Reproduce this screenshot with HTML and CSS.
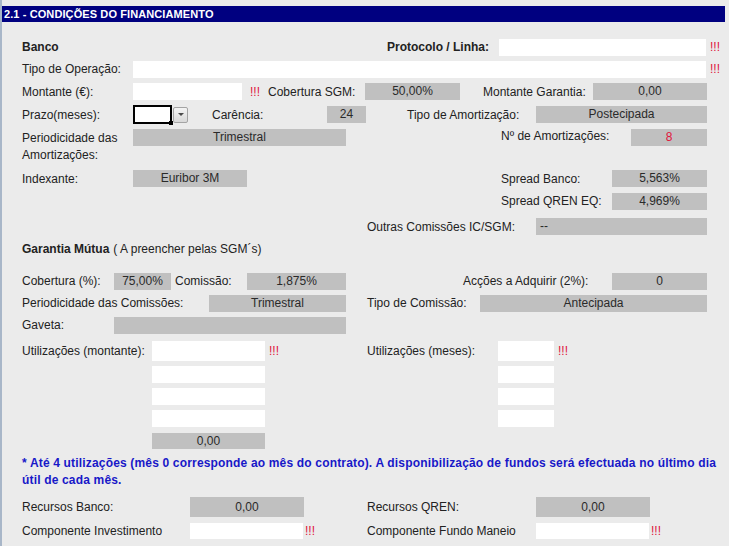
FILE: index.html
```html
<!DOCTYPE html>
<html lang="pt">
<head>
<meta charset="utf-8">
<title>Condições do Financiamento</title>
<link rel="stylesheet" href="styles.css">
</head>
<body>
<div class="page">
  <div class="hdr">2.1 - CONDIÇÕES DO FINANCIAMENTO</div>
  <div class="form">
    <div class="row r1">
      <div class="lbl b w365">Banco</div>
      <div class="lbl b w112">Protocolo / Linha:</div>
      <div class="in w207"></div>
      <div class="req pl4">!!!</div>
    </div>
    <div class="row r2">
      <div class="lbl w111">Tipo de Operação:</div>
      <div class="in w573"></div>
      <div class="req pl4">!!!</div>
    </div>
    <div class="row r3">
      <div class="lbl w111">Montante (€):</div>
      <div class="in w109"></div>
      <div class="req w26 pl8">!!!</div>
      <div class="lbl w97">Cobertura SGM:</div>
      <div class="ro w95">50,00%</div>
      <div class="lbl w133 pl23">Montante Garantia:</div>
      <div class="ro w114">0,00</div>
    </div>
    <div class="row r4">
      <div class="lbl w111">Prazo(meses):</div>
      <div class="sel">
        <div class="sel-box"><span class="sel-corner"></span></div>
        <div class="sel-btn"><span class="arrow"></span></div>
      </div>
      <div class="lbl w139 pl24">Carência:</div>
      <div class="ro w39">24</div>
      <div class="lbl w170 pl41">Tipo de Amortização:</div>
      <div class="ro w171">Postecipada</div>
    </div>
    <div class="row r5">
      <div class="lbl w111 two">Periodicidade das<br>Amortizações:</div>
      <div class="ro w213 mt3">Trimestral</div>
      <div class="lbl w285 pl155 mt3">Nº de Amortizações:</div>
      <div class="ro w76 mt3 red">8</div>
    </div>
    <div class="row r6">
      <div class="lbl w111">Indexante:</div>
      <div class="ro w114">Euribor 3M</div>
      <div class="lbl w365 pl254">Spread Banco:</div>
      <div class="ro w95">5,563%</div>
    </div>
    <div class="row r7">
      <div class="lbl w111 ml479">Spread QREN EQ:</div>
      <div class="ro w95">4,969%</div>
    </div>
    <div class="row r8">
      <div class="lbl w169 ml345">Outras Comissões IC/SGM:</div>
      <div class="ro w171 left">--</div>
    </div>
    <div class="row r9">
      <div class="lbl"><b>Garantia Mútua</b><span class="sub">( A preencher pelas SGM´s)</span></div>
    </div>
    <div class="row r10">
      <div class="lbl w92">Cobertura (%):</div>
      <div class="ro w57">75,00%</div>
      <div class="lbl w76 pl4">Comissão:</div>
      <div class="ro w99">1,875%</div>
      <div class="lbl w266 pl117">Acções a Adquirir (2%):</div>
      <div class="ro w95">0</div>
    </div>
    <div class="row r11">
      <div class="lbl w187">Periodicidade das Comissões:</div>
      <div class="ro w137">Trimestral</div>
      <div class="lbl w134 pl21">Tipo de Comissão:</div>
      <div class="ro w227">Antecipada</div>
    </div>
    <div class="row r12">
      <div class="lbl w92">Gaveta:</div>
      <div class="ro w232"></div>
    </div>
    <div class="util">
      <div class="lbl w130 h20">Utilizações (montante):</div>
      <div class="stack w114">
        <div class="in first"></div>
        <div class="in"></div>
        <div class="in"></div>
        <div class="in"></div>
        <div class="ro total">0,00</div>
      </div>
      <div class="req w101 pl3 h20">!!!</div>
      <div class="lbl w131 h20">Utilizações (meses):</div>
      <div class="stack w56">
        <div class="in first"></div>
        <div class="in"></div>
        <div class="in"></div>
        <div class="in"></div>
      </div>
      <div class="req pl4 h20">!!!</div>
    </div>
    <p class="note">* Até 4 utilizações (mês 0 corresponde ao mês do contrato). A disponibilização de fundos será efectuada no último dia<br>útil de cada mês.</p>
    <div class="row r18">
      <div class="lbl w168">Recursos Banco:</div>
      <div class="ro w114 h20">0,00</div>
      <div class="w63"></div>
      <div class="lbl w169">Recursos QREN:</div>
      <div class="ro w114 h20">0,00</div>
    </div>
    <div class="row r19">
      <div class="lbl w168">Componente Investimento</div>
      <div class="in w113 h16"></div>
      <div class="req w64 pl2">!!!</div>
      <div class="lbl w169">Componente Fundo Maneio</div>
      <div class="in w113 h16"></div>
      <div class="req pl2">!!!</div>
    </div>
  </div>
</div>
</body>
</html>
```

FILE: styles.css
```css
html, body {
  margin: 0;
  padding: 0;
  background: #ebebeb;
}
.page {
  border-left: 2px solid #a8b6c8;
  min-height: 546px;
  padding-top: 6px;
  box-sizing: border-box;
  font-family: "Liberation Sans", Arial, sans-serif;
  font-size: 12px;
  color: #222;
}
.hdr {
  width: 723px;
  height: 16px;
  box-sizing: border-box;
  padding-left: 2px;
  background: #000080;
  color: #fff;
  font-weight: bold;
  font-size: 11px;
  letter-spacing: 0.1px;
  line-height: 16px;
  white-space: nowrap;
}
.form {
  padding-left: 20px;
}
.row {
  display: flex;
  align-items: center;
}
.r1 { margin-top: 14px; height: 22px; }
.r2 { height: 22px; }
.r3 { height: 23px; }
.r4 { height: 23px; }
.r5 { height: 42px; align-items: flex-start; }
.r6 { height: 21px; }
.r7 { height: 24px; }
.r8 { height: 27px; }
.r9 { height: 18px; }
.r10 { margin-top: 12px; height: 22px; }
.r11 { height: 22px; }
.r12 { height: 22px; }
.r18 { margin-top: 8px; height: 20px; }
.r19 { margin-top: 3px; height: 22px; }

.lbl {
  white-space: nowrap;
  box-sizing: border-box;
  flex: none;
}
.lbl.two {
  margin-top: 4px;
  line-height: 17px;
}
.b { font-weight: bold; }
.sub { margin-left: 4px; }
.ro {
  flex: none;
  box-sizing: border-box;
  height: 17px;
  line-height: 17px;
  background: #c0c0c0;
  color: #2a2a2a;
  text-align: center;
  white-space: nowrap;
}
.ro.left { text-align: left; padding-left: 4px; }
.ro.red { color: #e0143c; }
.in {
  flex: none;
  height: 17px;
  background: #fff;
}
.req {
  flex: none;
  box-sizing: border-box;
  color: #e0143c;
  white-space: nowrap;
}
.h16 { height: 16px; }
.h20 { height: 20px; line-height: 20px; }
.ro.h20 { height: 20px; line-height: 20px; }

.sel {
  flex: none;
  width: 55px;
  height: 19px;
  display: flex;
  align-items: center;
}
.sel-box {
  position: relative;
  width: 39px;
  height: 19px;
  box-sizing: border-box;
  background: #fff;
  border: 2px solid #000;
}
.sel-corner {
  position: absolute;
  right: -3px;
  bottom: -3px;
  width: 4px;
  height: 4px;
  background: #000;
}
.sel-btn {
  margin-left: 1px;
  width: 15px;
  height: 16px;
  box-sizing: border-box;
  border: 1px solid #a4a4a4;
  border-radius: 2px;
  background: linear-gradient(#f4f4f4, #d8d8d8);
  display: flex;
  align-items: center;
  justify-content: center;
}
.arrow {
  width: 0;
  height: 0;
  border-left: 3px solid transparent;
  border-right: 3px solid transparent;
  border-top: 3px solid #4a4a4a;
}

.util {
  display: flex;
  align-items: flex-start;
  margin-top: 5px;
}
.stack {
  flex: none;
  display: flex;
  flex-direction: column;
}
.stack .in { height: 17px; margin-top: 5px; }
.stack .in.first { height: 20px; margin-top: 0; }
.stack .total { height: 16px; line-height: 16px; margin-top: 6px; }
.stack.w114 .in, .stack.w114 .total { width: 113px; }
.stack.w56 .in { width: 56px; }

.note {
  margin: 6px 0 0 0;
  color: #1818c8;
  font-weight: bold;
  letter-spacing: 0.17px;
  line-height: 17px;
  white-space: nowrap;
}

.mt3 { margin-top: 3px; }
.ml345 { margin-left: 345px; }
.ml479 { margin-left: 479px; }
.pl2 { padding-left: 2px; }
.pl3 { padding-left: 3px; }
.pl4 { padding-left: 4px; }
.pl8 { padding-left: 8px; }
.pl21 { padding-left: 21px; }
.pl23 { padding-left: 23px; }
.pl24 { padding-left: 24px; }
.pl41 { padding-left: 41px; }
.pl117 { padding-left: 117px; }
.pl155 { padding-left: 155px; }
.pl254 { padding-left: 254px; }

.w26 { width: 26px; }
.w39 { width: 39px; }
.w56 { width: 56px; }
.w57 { width: 57px; }
.w63 { width: 63px; flex: none; }
.w64 { width: 64px; }
.w76 { width: 76px; }
.w92 { width: 92px; }
.w95 { width: 95px; }
.w97 { width: 97px; }
.w99 { width: 99px; }
.w101 { width: 101px; }
.w109 { width: 109px; }
.w111 { width: 111px; }
.w112 { width: 112px; }
.w113 { width: 113px; }
.w114 { width: 114px; }
.w130 { width: 130px; }
.w131 { width: 131px; }
.w133 { width: 133px; }
.w134 { width: 134px; }
.w137 { width: 137px; }
.w139 { width: 139px; }
.w168 { width: 168px; }
.w169 { width: 169px; }
.w170 { width: 170px; }
.w171 { width: 171px; }
.w187 { width: 187px; }
.w207 { width: 207px; }
.w213 { width: 213px; }
.w227 { width: 227px; }
.w232 { width: 232px; }
.w266 { width: 266px; }
.w285 { width: 285px; }
.w365 { width: 365px; }
.w573 { width: 573px; }
```
